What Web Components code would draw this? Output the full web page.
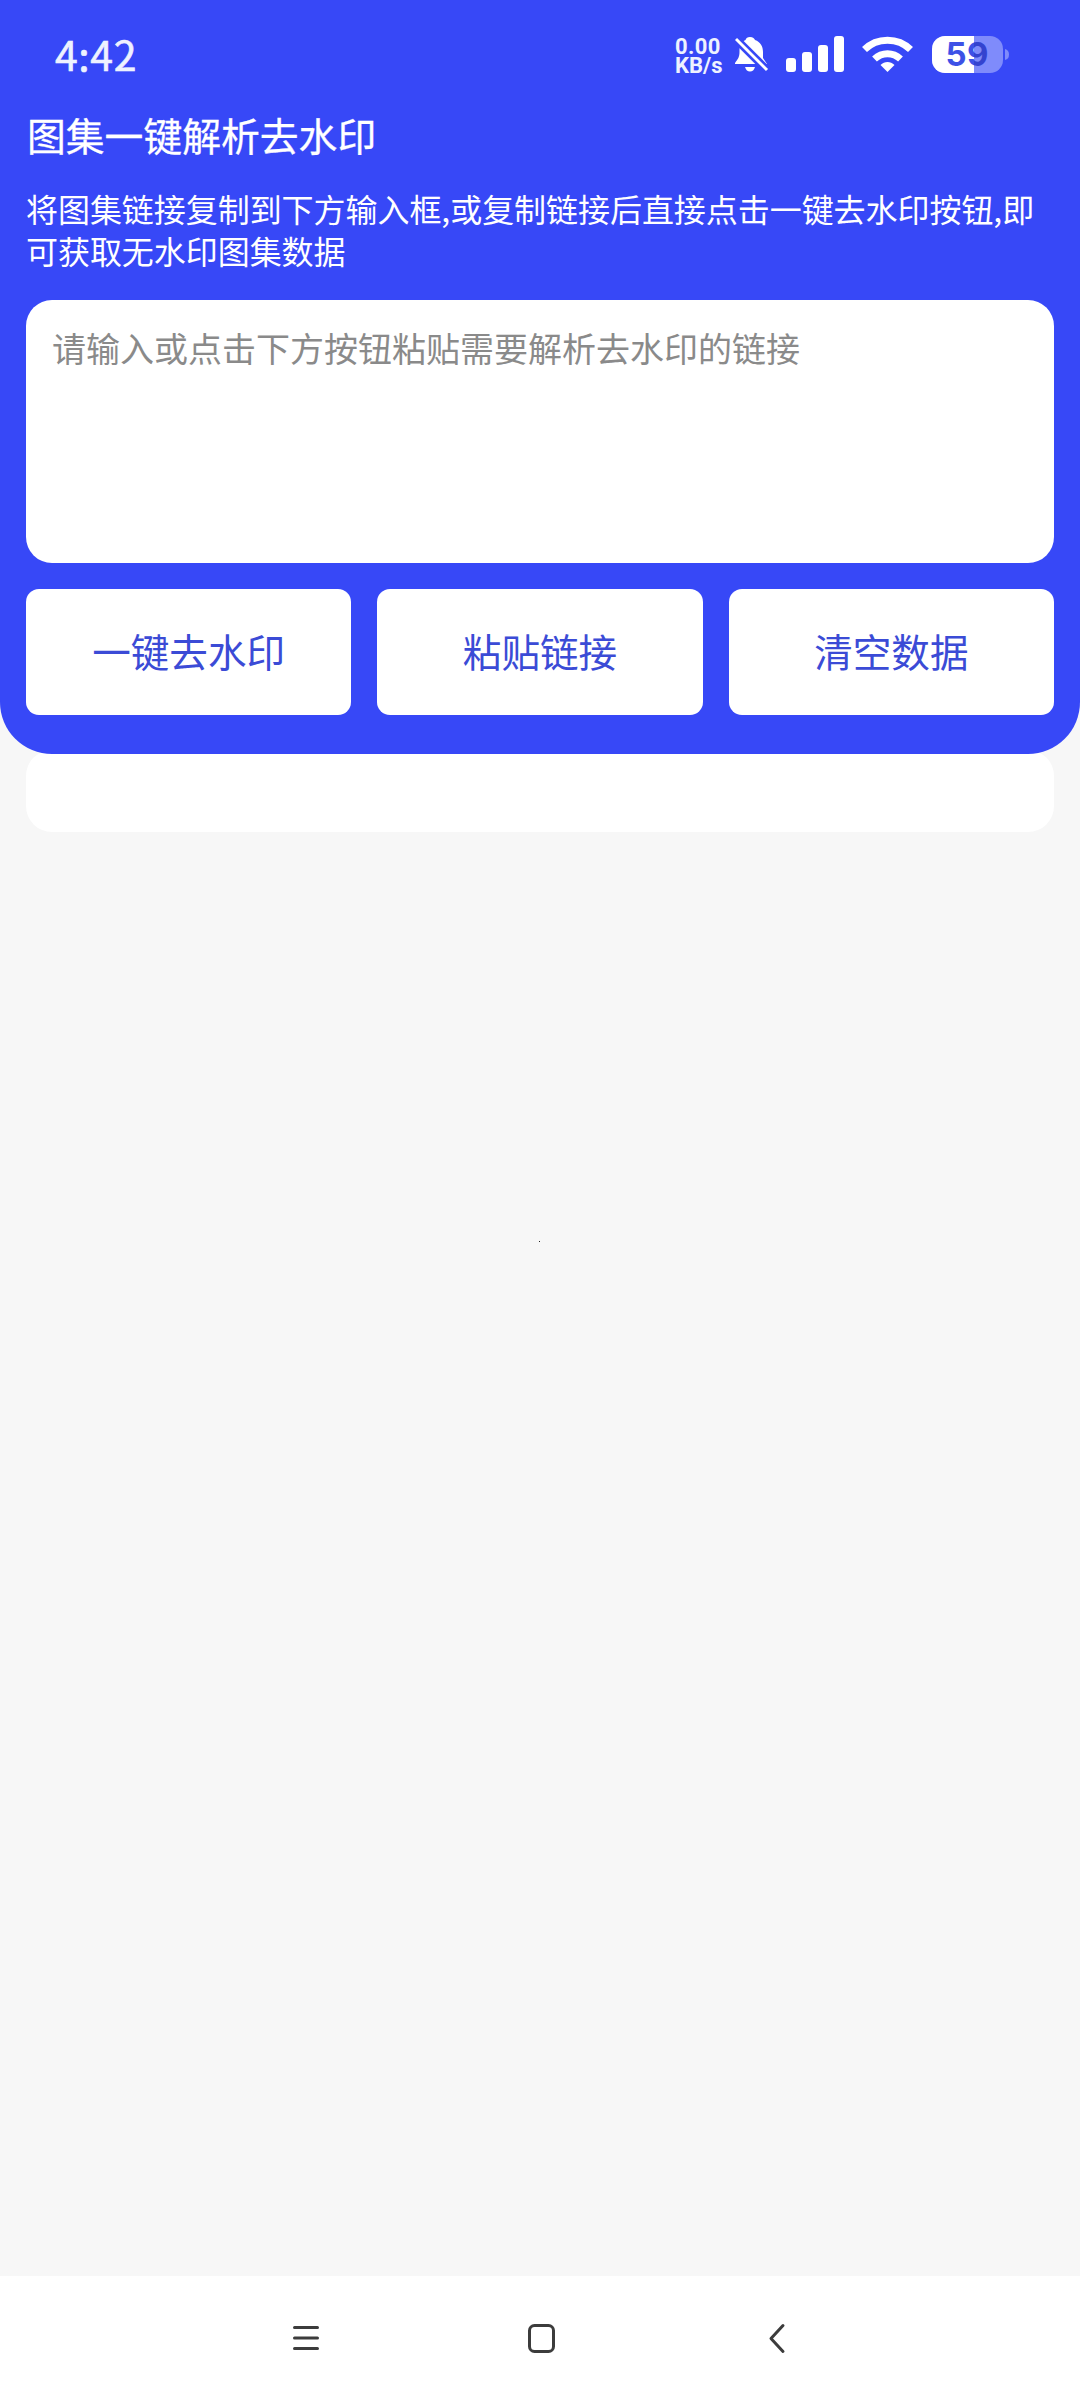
<!DOCTYPE html>
<html lang="zh-CN">
<head>
<meta charset="utf-8">
<title>图集一键解析去水印</title>
<style>
html,body{margin:0;padding:0}
body{width:1080px;height:2400px;background:#f7f7f7;font-family:"Noto Sans CJK SC","Noto Sans",sans-serif;overflow:hidden}
</style>
</head>
<body>
<app-screen></app-screen>
<script>
const define = (name, html) => customElements.define(name, class extends HTMLElement {
  constructor() {
    super();
    this.attachShadow({mode: 'open'}).innerHTML = html;
  }
});

define('status-bar', `
<style>
:host{display:flex;height:108px;box-sizing:border-box;padding:0 70px 0 55px;align-items:center;justify-content:space-between;color:#eef2ff;font-family:"Noto Sans CJK SC",sans-serif}
.time{font-size:41px;line-height:60px;font-weight:400;-webkit-text-stroke:.6px #eef2ff;letter-spacing:.6px;padding-bottom:3px}
.right{display:flex;align-items:center}
.rate{display:flex;flex-direction:column;font:700 22px/19px Roboto,sans-serif;width:60px;white-space:nowrap;padding-top:3px}
.rate span:first-child{letter-spacing:.4px}
svg{display:block}
</style>
<div class="time">4:42</div>
<div class="right">
<div class="rate"><span>0.00</span><span>KB/s</span></div>
<svg width="275" height="40" viewBox="735 34 275 40">
<g fill="#fff">
<path d="M750 37c3 0 4.500 1.500 5 3 5.500 2 8 6.500 8 12v6l4 6H735v-1c3-4 4.500-6 4.500-11v-2c0-5 2-8.500 6-10 .6-1.700 2-3 4.500-3z"/>
<path d="M745 67h10c-1 3-2.500 4.500-5 4.500s-4-1.500-5-4.500z"/>
<path d="M736 39L767 70" stroke="#3748f7" stroke-width="8"/>
<path d="M736 39L767 70" stroke="#fff" stroke-width="3"/>
<rect x="786" y="58" width="10" height="14" rx="3"/>
<rect x="802" y="52" width="10" height="20" rx="3"/>
<rect x="818" y="45" width="10" height="27" rx="3"/>
<rect x="834" y="36" width="10" height="36" rx="3"/>
</g>
<g fill="none" stroke="#fff" stroke-width="7">
<path d="M864.500 49.500C877 37 898 37 910.500 49.500"/>
<path d="M874.500 59C882 52 893 52 900.500 59"/>
</g>
<path d="M880.500 65c4-4 10-4 14 0l-7 7z" fill="#fff"/>
<clipPath id="b"><rect x="932" y="36" width="71" height="37" rx="13"/></clipPath>
<g clip-path="url(#b)"><rect x="932" y="36" width="71" height="37" fill="#7f8bfb"/><rect x="932" y="36" width="42" height="37" fill="#fff"/></g>
<path d="M1005 49q4 1 4 5.500t-4 5.500z" fill="#7f8bfb"/>
<linearGradient id="g" gradientUnits="userSpaceOnUse" x1="946" x2="1002" y1="0" y2="0"><stop offset=".5" stop-color="#3d51e6"/><stop offset=".5" stop-color="#3443cf"/></linearGradient>
<text x="945.500" y="66" textLength="43" font-family="Inter,sans-serif" font-weight="700" font-size="33" fill="url(#g)">59</text>
</svg>
</div>`);

define('link-input', `
<style>
:host{display:block;height:263px;box-sizing:border-box;border-radius:26px;background:#fff;padding:23px 26px;font-size:34px;line-height:50px;color:#8a8a8a;white-space:nowrap}
</style><slot></slot>`);

define('action-button', `
<style>
:host{display:flex;flex:1;height:126px;box-sizing:border-box;padding-bottom:5px;border-radius:13px;background:#fff;align-items:center;justify-content:center;font-size:38.600px;color:#3b4bd6}
</style><slot></slot>`);

define('tool-header', `
<style>
:host{display:block;position:relative;z-index:1;height:754px;background:#3748f7;border-radius:0 0 52px 52px;color:#fff}
main{padding:0 26px}
h1{margin:-3px 0 0 1px;font-size:38.800px;line-height:58px;font-weight:400;-webkit-text-stroke:.3px #fff}
p{margin:24px 0 28px;font-size:32px;line-height:42px;height:85px;width:1020px;letter-spacing:-.05px}
.row{display:flex;gap:26px;margin-top:26px}
</style>
<status-bar></status-bar>
<main>
<h1>图集一键解析去水印</h1>
<p>将图集链接复制到下方输入框,或复制链接后直接点击一键去水印按钮,即可获取无水印图集数据</p>
<link-input>请输入或点击下方按钮粘贴需要解析去水印的链接</link-input>
<div class="row"><action-button>一键去水印</action-button><action-button>粘贴链接</action-button><action-button>清空数据</action-button></div>
</main>`);

define('result-card', `
<style>:host{display:block;margin:-4px 26px 0;height:82px;border-radius:26px;background:#fff}</style><slot></slot>`);

define('nav-bar', `
<style>
:host{display:flex;height:124px;background:#fff;align-items:center;justify-content:center}
svg{display:block}
</style>
<svg width="540" height="40" viewBox="270 2318 540 40" fill="none" stroke="#3c3c3c" stroke-width="3" stroke-linecap="round" stroke-linejoin="round">
<path d="M294.500 2327.500H317.500M294.500 2338H317.500M294.500 2348.500H317.500"/>
<rect x="529.500" y="2325.500" width="24" height="26" rx="5"/>
<path d="M783 2325.500L771 2338.500L783 2351.500"/>
</svg>`);

define('loading-dot', `
<style>:host{display:flex;flex:1;justify-content:center;padding:409px 2px 0 0}
i{width:1px;height:1px;background:#222}</style><i></i>`);

define('app-screen', `
<style>:host{display:flex;flex-direction:column;height:2400px}</style>
<tool-header></tool-header>
<result-card></result-card>
<loading-dot></loading-dot>
<nav-bar></nav-bar>`);
</script>
</body>
</html>
